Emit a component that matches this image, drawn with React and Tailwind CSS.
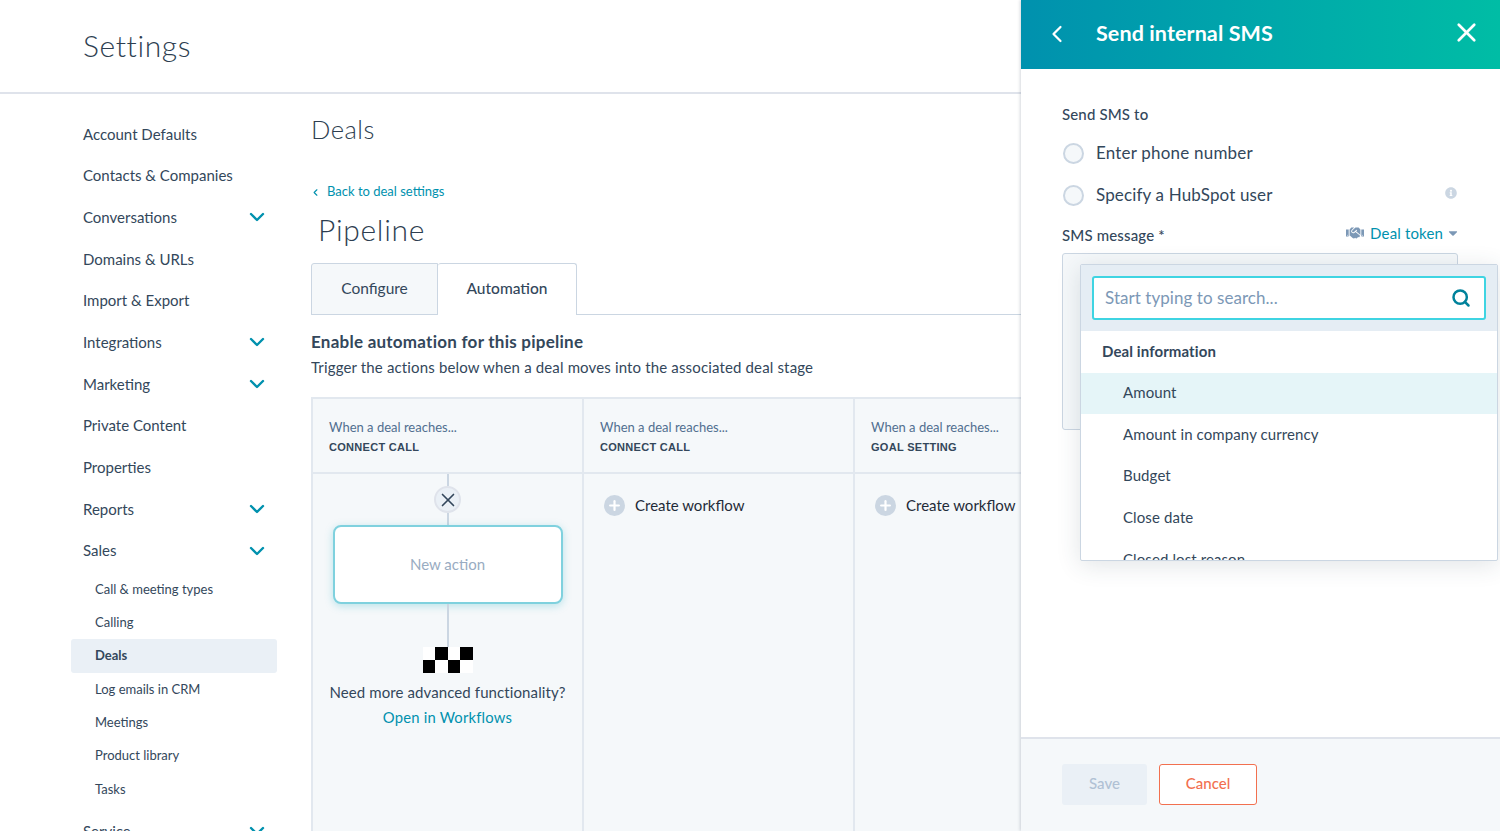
import React from 'react';
import { ChevronDown, ChevronLeft, X, Search, Plus } from 'lucide-react';
import { FaHandshake, FaInfoCircle, FaCaretDown } from 'react-icons/fa';

const nav = [
  ['Account Defaults'], ['Contacts & Companies'], ['Conversations', true], ['Domains & URLs'], ['Import & Export'],
  ['Integrations', true], ['Marketing', true], ['Private Content'], ['Properties'], ['Reports', true], ['Sales', true],
];
const sub = ['Call & meeting types', 'Calling', 'Deals', 'Log emails in CRM', 'Meetings', 'Product library', 'Tasks'];

function Column({ stage, children, last }) {
  return (
    <div className={`w-[271px] shrink-0 flex flex-col bg-[#f5f8fa] border-r-2 border-[#e2e8ef] ${last ? 'border-r-0' : ''}`}>
      <div className="h-[75px] shrink-0 border-b-2 border-[#e2e8ef] pl-[16px] pt-[19px]">
        <div className="text-[13px] leading-[18px] text-[#516f90]">When a deal reaches...</div>
        <div className="text-[11px] leading-[18px] mt-[2px] font-bold text-[#33475b] tracking-[0.3px] font-['Liberation_Sans',sans-serif]">{stage}</div>
      </div>
      {children}
    </div>
  );
}

function CreateWorkflow() {
  return (
    <div className="flex items-center pl-[20px] pt-[20px]">
      <span className="w-[21px] h-[21px] rounded-full bg-[#cbd6e2] flex items-center justify-center text-white"><Plus size={15} strokeWidth={3.5} /></span>
      <span className="ml-[10px] text-[15px] leading-[22px] text-[#1f2b38] whitespace-nowrap">Create workflow</span>
    </div>
  );
}

export default function App() {
  return (
    <div className="relative w-[1500px] h-[831px] overflow-hidden bg-white text-[#33475b] font-['Lato','Open_Sans',sans-serif]">
      <header className="h-[94px] border-b-2 border-[#dfe3eb] pl-[83px] pt-[25px]">
        <h1 className="text-[30px] leading-[40px] font-light text-[#2d3e50] tracking-[0.6px]">Settings</h1>
      </header>
      <div className="flex h-[737px]">
        <aside className="w-[311px] shrink-0 pl-[71px] pt-[19px]">
          <div className="w-[206px]">
            {nav.map(([label, chev]) => (
              <div key={label} className="h-[41.7px] pl-[12px] pr-[8px] flex items-center justify-between text-[15px] text-[#33475b]">
                <span>{label}</span>
                {chev && <ChevronDown size={24} strokeWidth={2.4} className="text-[#0091ae]" />}
              </div>
            ))}
            <div className="pt-[1px]">
              {sub.map((s) => (
                <div key={s} className={`h-[33.4px] pl-[24px] flex items-center text-[13px] rounded-[3px] ${s === 'Deals' ? 'bg-[#eaf0f6] font-bold' : ''}`}>{s}</div>
              ))}
            </div>
            <div className="h-[41.7px] mt-[4px] pl-[12px] pr-[8px] flex items-center justify-between text-[15px]">
              <span>Service</span>
              <ChevronDown size={24} strokeWidth={2.4} className="text-[#0091ae]" />
            </div>
          </div>
        </aside>
        <main className="flex-1 min-w-0 overflow-hidden">
          <h2 className="mt-[18px] text-[25.5px] leading-[34px] font-light text-[#2d3e50] tracking-[0.5px]">Deals</h2>
          <div className="mt-[36px] h-[20px] flex items-center text-[13px] text-[#0091ae]">
            <ChevronLeft size={11} strokeWidth={2.5} className="ml-[-1px] mr-[5px]" />
            <span className="ml-[1px]">Back to deal settings</span>
          </div>
          <h1 className="mt-[7px] ml-[7px] text-[30px] leading-[40px] font-light text-[#2d3e50] tracking-[0.7px]">Pipeline</h1>
          <div className="mt-[14px] flex h-[52px] w-[1189px] border-b border-[#cbd6e2]">
            <div className="w-[127px] h-[52px] pb-[1px] border border-[#cbd6e2] bg-[#f5f8fa] rounded-tl-[3px] flex items-center justify-center text-[15.5px] text-[#33475b]">Configure</div>
            <div className="w-[139px] h-[52px] pb-[1px] border border-l-0 border-b-0 border-[#cbd6e2] bg-white rounded-t-[3px] flex items-center justify-center text-[15.5px] text-[#33475b] font-medium">Automation</div>
          </div>
          <div className="mt-[15px] text-[17px] leading-[24px] font-bold text-[#33475b] tracking-[0.25px]">Enable automation for this pipeline</div>
          <div className="mt-[1px] text-[15px] leading-[24px] text-[#33475b] tracking-[0.15px] whitespace-nowrap">Trigger the actions below when a deal moves into the associated deal stage</div>
          <div className="mt-[18px] flex h-[500px] w-[1000px] border-t-2 border-l-2 border-[#e2e8ef]">
            <Column stage="CONNECT CALL">
              <div className="flex flex-col items-center relative">
                <div className="w-[2px] h-[12px] bg-[#cbd6e2]" />
                <div className="w-[27px] h-[27px] rounded-full bg-[#eaf0f6] border-2 border-[#dfe3eb] flex items-center justify-center text-[#33475b]"><X size={22} strokeWidth={1.8} className="shrink-0" /></div>
                <div className="w-[2px] h-[12px] bg-[#cbd6e2]" />
                <div className="w-[230px] h-[79px] bg-white border-2 border-[#7fd1de] rounded-[8px] shadow-[0_2px_8px_rgba(0,164,189,0.25)] flex items-center justify-center text-[15px] text-[#99acc2]">New action</div>
                <div className="w-[2px] h-[43px] bg-[#cbd6e2]" />
                <div className="grid grid-cols-4 w-[50px] h-[26px]">
                  <div className="bg-white" /><div className="bg-black" /><div className="bg-white" /><div className="bg-black" />
                  <div className="bg-black" /><div className="bg-white" /><div className="bg-black" /><div className="bg-white" />
                </div>
                <div className="mt-[6px] text-[15px] leading-[27px] text-[#33475b] tracking-[0.1px] whitespace-nowrap">Need more advanced functionality?</div>
                <div className="text-[14.8px] leading-[23px] text-[#0091ae] tracking-[0.2px]">Open in Workflows</div>
              </div>
            </Column>
            <Column stage="CONNECT CALL"><CreateWorkflow /></Column>
            <Column stage="GOAL SETTING" last><CreateWorkflow /></Column>
          </div>
        </main>
      </div>

      <section className="absolute top-0 right-0 bottom-0 w-[479px] bg-white flex flex-col shadow-[-1px_0_3px_rgba(45,62,80,0.2)]">
        <div className="h-[69px] shrink-0 bg-gradient-to-r from-[#0091ae] to-[#00bda5] flex items-center text-white pb-[2px]">
          <ChevronLeft size={28} strokeWidth={1.9} className="ml-[22px]" />
          <span className="ml-[25px] text-[21.5px] font-bold tracking-[0.1px]">Send internal SMS</span>
          <X size={31} strokeWidth={2.1} className="ml-auto mr-[18px] mb-[3px]" />
        </div>
        <div className="flex-1 relative pl-[41px] pr-[42px] pt-[34px]">
          <div className="text-[15px] leading-[22px] font-medium text-[#33475b] tracking-[0.15px]">Send SMS to</div>
          <div className="mt-[11px] h-[34px] flex items-center">
            <span className="ml-[1px] w-[21px] h-[21px] rounded-full border-2 border-[#cbd6e2] bg-[#f5f8fa]" />
            <span className="ml-[12px] text-[17px] tracking-[0.2px] text-[#33475b]">Enter phone number</span>
          </div>
          <div className="mt-[8px] h-[34px] flex items-center">
            <span className="ml-[1px] w-[21px] h-[21px] rounded-full border-2 border-[#cbd6e2] bg-[#f5f8fa]" />
            <span className="ml-[12px] text-[17px] tracking-[0.15px] text-[#33475b]">Specify a HubSpot user</span>
            <FaInfoCircle size={12} className="ml-auto mr-[1px] mb-[4px] text-[#cbd6e2]" />
          </div>
          <div className="mt-[11px] h-[24px] flex items-center justify-between">
            <span className="text-[15px] font-medium text-[#33475b] tracking-[0.15px]">SMS message *</span>
            <span className="flex items-center text-[#0091ae] text-[15px] tracking-[0.15px] mb-[4px] mr-[-2px]">
              <FaHandshake size={18} className="text-[#7c98b6] mr-[6px]" />
              Deal token
              <FaCaretDown size={14} className="text-[#7c98b6] ml-[3px]" />
            </span>
          </div>
          <div className="mt-[6px] h-[177px] border border-[#cbd6e2] rounded-[3px] bg-[#f5f8fa]" />

          <div className="absolute left-[59px] top-[195px] w-[418px] h-[297px] bg-white border border-[#cbd6e2] rounded-[2px] overflow-hidden shadow-[0_4px_24px_rgba(45,62,80,0.14)]">
            <div className="h-[66px] bg-[#e5edf4] pl-[11px] pr-[11px] pt-[11px]">
              <div className="h-[44px] bg-white border-2 border-[#3fd4e2] rounded-[3px] flex items-center justify-between pl-[11px] pr-[13px]">
                <span className="text-[17px] text-[#7c98b6] tracking-[0.05px]">Start typing to search...</span>
                <Search size={20} strokeWidth={3} className="text-[#00829b]" />
              </div>
            </div>
            <div className="h-[42px] pl-[21px] pb-[2px] flex items-center text-[15px] font-bold text-[#33475b] tracking-[0.1px]">Deal information</div>
            <div className="h-[41px] pl-[42px] pb-[2px] flex items-center text-[15px] bg-[#e5f5f8] tracking-[0.1px]">Amount</div>
            {['Amount in company currency', 'Budget', 'Close date', 'Closed lost reason'].map((t) => (
              <div key={t} className="h-[41.7px] pl-[42px] pb-[2px] flex items-center text-[15px] tracking-[0.1px]">{t}</div>
            ))}
          </div>
        </div>
        <div className="h-[94px] shrink-0 border-t-2 border-[#dfe3eb] bg-[#f5f8fa] pl-[41px] pt-[25px] flex items-start gap-[12px]">
          <div className="w-[85px] h-[41px] pb-[2px] rounded-[3px] bg-[#eaf0f6] flex items-center justify-center text-[15px] font-medium text-[#b0c1d4]">Save</div>
          <div className="w-[98px] h-[41px] pb-[2px] rounded-[3px] bg-white border border-[#f2704f] flex items-center justify-center text-[15px] font-medium text-[#f2704f]">Cancel</div>
        </div>
      </section>
    </div>
  );
}
